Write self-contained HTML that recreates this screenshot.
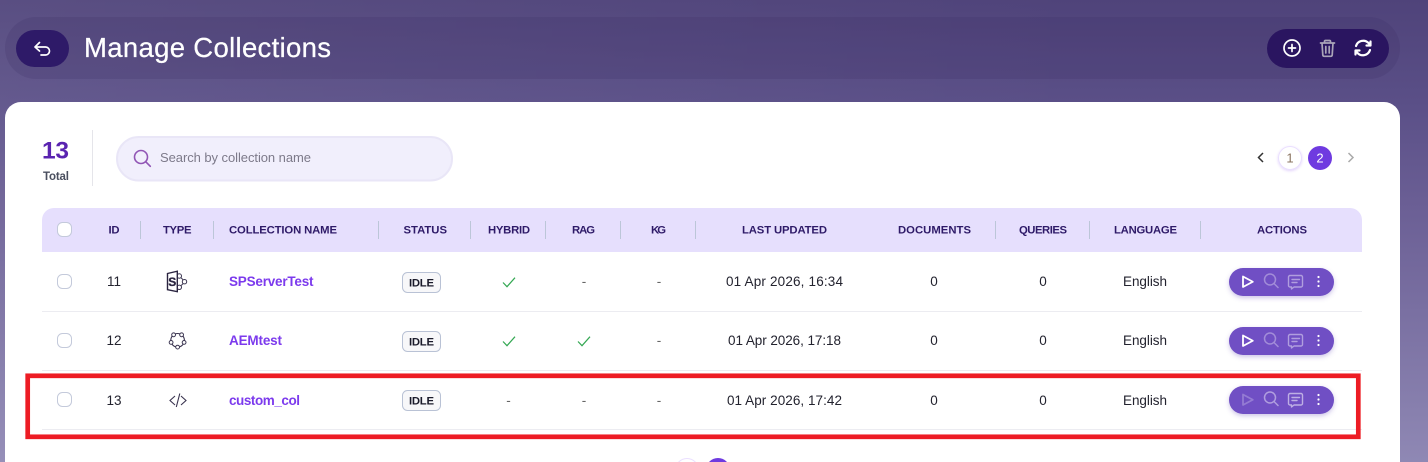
<!DOCTYPE html>
<html lang="en">
<head>
<meta charset="utf-8">
<title>Manage Collections</title>
<style>
html,body{margin:0;padding:0;width:1428px;height:462px;overflow:hidden;background:#fff}
svg{display:block;position:absolute;left:0;top:0}
text{font-family:"Liberation Sans",sans-serif}
.h{font-size:11.3px;font-weight:700;fill:#2e1a68}
.c{font-size:13.5px;fill:#23232f;text-anchor:middle}
.n{font-size:13.5px;font-weight:700;fill:#7c3aed}
.b{font-size:11.3px;font-weight:700;fill:#1a1a2a}
.d{font-size:13.5px;fill:#666;text-anchor:middle}
.box{fill:#fff;stroke:#c4cadb;stroke-width:1}
.sep{stroke:#bcc6d8;stroke-width:1}
.row{stroke:#ececf1;stroke-width:1}
.ok{fill:none;stroke:#34a853;stroke-width:1.2}
.badge{fill:#f7f7f9;stroke:#b9c2d5;stroke-width:1}
.ic{fill:none;stroke:#fff;stroke-width:1.7;stroke-linecap:round;stroke-linejoin:round}
</style>
</head>
<body>
<svg width="1428" height="462" viewBox="0 0 1428 462" xmlns="http://www.w3.org/2000/svg">
<defs>
<linearGradient id="bg" gradientUnits="userSpaceOnUse" x1="0" y1="0" x2="0" y2="462">
<stop offset="0" stop-color="#4f437a"/>
<stop offset=".22" stop-color="#5a4f87"/>
<stop offset=".45" stop-color="#6b5f95"/>
<stop offset="1" stop-color="#8f88b4"/>
</linearGradient>
<linearGradient id="bgl" gradientUnits="userSpaceOnUse" x1="0" y1="0" x2="1100" y2="0">
<stop offset="0" stop-color="#fff" stop-opacity=".06"/>
<stop offset="1" stop-color="#fff" stop-opacity="0"/>
</linearGradient>
<filter id="sh" x="-20%" y="-30%" width="140%" height="170%"><feDropShadow dx="0" dy="2" stdDeviation="2.5" flood-color="#5b3fb0" flood-opacity=".3"/></filter>
<filter id="sh2" x="-30%" y="-30%" width="160%" height="160%"><feDropShadow dx="0" dy="1" stdDeviation="1.2" flood-color="#7c3aed" flood-opacity=".22"/></filter>
<g id="acts">
<rect x="1229" y="0" width="105" height="28" rx="14" fill="#6f4fc4" filter="url(#sh)"/>
<circle cx="1318.5" cy="9" r="1.100" fill="#fff"/><circle cx="1318.5" cy="13.500" r="1.100" fill="#fff"/><circle cx="1318.5" cy="18" r="1.100" fill="#fff"/>
</g>
<path id="pl" d="M1243 8.500v10.500l9.800-5.250z"/>
<path id="se" d="M1275.500 11.500a5.500 5.500 0 1 1-11 0a5.500 5.500 0 1 1 11 0M1274 15.500l4 4"/>
<path id="ch" d="M1290 7.500h11a1.500 1.500 0 0 1 1.500 1.500v8.500a1.500 1.500 0 0 1-1.500 1.500h-7l-2.500 2v-2H1290a1.500 1.500 0 0 1-1.500-1.500V9a1.500 1.500 0 0 1 1.500-1.500zM1292 11.500h7.500M1292 14.500h5"/>
</defs>

<rect width="1428" height="462" fill="url(#bg)"/>
<rect width="1428" height="462" fill="url(#bgl)"/>
<rect x="5" y="17" width="1395" height="62" rx="31" fill="#3c2f63" fill-opacity=".2"/>
<rect x="16" y="30" width="53" height="37" rx="18.500" fill="#2e1a68"/>
<path d="M39.500 42.500 35 47l4.500 4M35 47h10.500a4 4 0 0 1 0 8H41" class="ic"/>
<text x="84" y="57" font-size="27.500" fill="#fff" stroke="#fff" stroke-width=".25" textLength="247">Manage Collections</text>

<rect x="1267" y="29" width="122" height="39" rx="19.500" fill="#2a1560"/>
<circle cx="1292" cy="48" r="8" class="ic"/><path d="M1288.500 48h7M1292 44.500v7" class="ic"/>
<path d="M1320.500 43h14M1324.500 43v-1.500a1 1 0 0 1 1-1h4a1 1 0 0 1 1 1V43M1322 43l.8 12a1.500 1.500 0 0 0 1.500 1.300h6.400a1.500 1.500 0 0 0 1.500-1.300l.8-12M1325.800 46.500v6.500M1329.200 46.500v6.500" fill="none" stroke="#aaa5b8" stroke-width="1.700" stroke-linecap="round" stroke-linejoin="round"/>
<path d="M1356 46a7.500 7.500 0 0 1 12.500-3l2 2M1370.500 41.500v4H1366.500M1370 50a7.500 7.500 0 0 1-12.500 3l-2-2M1355.500 54.500v-4h4" fill="none" stroke="#fff" stroke-width="2.200" stroke-linecap="round" stroke-linejoin="round"/>

<path d="M5 462V118a16 16 0 0 1 16-16h1363a16 16 0 0 1 16 16v344z" fill="#fff"/>

<text x="42" y="158.500" font-size="24.500" font-weight="700" fill="#5a24b0" textLength="27">13</text>
<text x="43" y="180" font-size="11.500" font-weight="700" fill="#4a4f5f" textLength="26">Total</text>
<line x1="92.500" y1="130" x2="92.500" y2="186" stroke="#e5e5ea"/>

<rect x="117" y="137" width="335" height="43.500" rx="21.700" fill="#f1effc" stroke="#e9e6f7" stroke-width="2"/>
<circle cx="141" cy="157" r="6.500" fill="none" stroke="#9156b5" stroke-width="1.600"/>
<path d="M145.800 161.800l4.500 4.500" stroke="#9156b5" stroke-width="1.600" stroke-linecap="round"/>
<text x="160" y="162" font-size="13" fill="#7d7a8a" textLength="151">Search by collection name</text>

<path d="M1263 153l-4.500 4.500 4.500 4.500" fill="none" stroke="#333" stroke-width="1.500"/>
<circle cx="1290" cy="158" r="11.500" fill="#fff" stroke="#eadfff" filter="url(#sh2)"/>
<text x="1290" y="162.500" font-size="13" fill="#8a7460" text-anchor="middle">1</text>
<circle cx="1320" cy="158" r="12" fill="#6f3ae0"/>
<text x="1320" y="162.500" font-size="13" fill="#fff" text-anchor="middle">2</text>
<path d="M1348.500 153l4.500 4.500-4.500 4.500" fill="none" stroke="#aaa" stroke-width="1.500"/>

<path d="M42 252v-32a12 12 0 0 1 12-12h1296a12 12 0 0 1 12 12v32z" fill="#e6dffd"/>
<rect x="57.500" y="222.500" width="14" height="14" rx="5" class="box"/>
<text class="h" x="108.500" y="233.500" textLength="11">ID</text>
<text class="h" x="163" y="233.500" textLength="28.500">TYPE</text>
<text class="h" x="229" y="233.500" textLength="108">COLLECTION NAME</text>
<text class="h" x="403.500" y="233.500" textLength="43.500">STATUS</text>
<text class="h" x="488" y="233.500" textLength="42">HYBRID</text>
<text class="h" x="572" y="233.500" textLength="23">RAG</text>
<text class="h" x="651" y="233.500" textLength="15">KG</text>
<text class="h" x="742" y="233.500" textLength="85">LAST UPDATED</text>
<text class="h" x="898" y="233.500" textLength="73">DOCUMENTS</text>
<text class="h" x="1019" y="233.500" textLength="48">QUERIES</text>
<text class="h" x="1114" y="233.500" textLength="63">LANGUAGE</text>
<text class="h" x="1257" y="233.500" textLength="50">ACTIONS</text>
<g class="sep">
<line x1="140.500" y1="221" x2="140.500" y2="239"/><line x1="213.500" y1="221" x2="213.500" y2="239"/>
<line x1="378.500" y1="221" x2="378.500" y2="239"/><line x1="470.500" y1="221" x2="470.500" y2="239"/>
<line x1="545.500" y1="221" x2="545.500" y2="239"/><line x1="620.500" y1="221" x2="620.500" y2="239"/>
<line x1="695.500" y1="221" x2="695.500" y2="239"/><line x1="995.500" y1="221" x2="995.500" y2="239"/>
<line x1="1089.500" y1="221" x2="1089.500" y2="239"/><line x1="1200.500" y1="221" x2="1200.500" y2="239"/>
</g>

<g class="row">
<line x1="42" y1="311.500" x2="1362" y2="311.500"/>
<line x1="42" y1="370.500" x2="1362" y2="370.500"/>
<line x1="42" y1="429.500" x2="1362" y2="429.500"/>
</g>

<!-- Row 1 -->
<rect x="57.500" y="274.500" width="14" height="14" rx="5" class="box"/>
<text class="c" x="114" y="286">11</text>
<path d="M179.300 276L185 281.700L179.300 287.300" fill="none" stroke="#3a3450" stroke-width="1"/>
<g fill="#fff" stroke="#3a3450" stroke-width="1"><circle cx="179.300" cy="276" r="2.200"/><circle cx="184.500" cy="281.700" r="2.200"/><circle cx="179.300" cy="287.300" r="2.200"/></g>
<path d="M167.500 273.500l9.800-2.300v20.500l-9.800-2z" fill="#fff" stroke="#2a2440" stroke-width="1.400"/>
<text x="172.300" y="286.200" font-size="12" font-weight="700" fill="#2a2440" stroke="#2a2440" stroke-width=".3" text-anchor="middle">S</text>
<text class="n" x="229" y="286" textLength="84.500">SPServerTest</text>
<rect x="402.500" y="272.500" width="38" height="20" rx="5" class="badge"/>
<text class="b" x="409" y="286.500" textLength="25">IDLE</text>
<path d="M503 282.500l4 4.200 8-9" class="ok"/>
<text class="d" x="584" y="286">-</text><text class="d" x="659" y="286">-</text>
<text class="c" x="784.500" y="286" textLength="117">01 Apr 2026, 16:34</text>
<text class="c" x="934" y="286">0</text><text class="c" x="1043" y="286">0</text>
<text class="c" x="1145" y="286" textLength="44">English</text>
<g transform="translate(0,268)">
<use href="#acts"/>
<use href="#pl" fill="none" stroke="#fff" stroke-width="1.800" stroke-linejoin="round"/>
<use href="#se" fill="none" stroke="#fff" stroke-opacity=".35" stroke-width="1.500" stroke-linecap="round"/>
<use href="#ch" fill="none" stroke="#fff" stroke-opacity=".45" stroke-width="1.400" stroke-linecap="round" stroke-linejoin="round"/>
</g>

<!-- Row 2 -->
<rect x="57.500" y="333.500" width="14" height="14" rx="5" class="box"/>
<text class="c" x="114" y="345">12</text>
<circle cx="177.600" cy="340.300" r="6.800" fill="none" stroke="#3a3450" stroke-width="1.100"/>
<g fill="#fff" stroke="#3a3450" stroke-width="1"><circle cx="173.600" cy="334.800" r="1.900"/><circle cx="181.600" cy="334.800" r="1.900"/><circle cx="171.100" cy="342.400" r="1.900"/><circle cx="184.100" cy="342.400" r="1.900"/><circle cx="177.600" cy="347.100" r="1.900"/></g>
<text class="n" x="229" y="345" textLength="53">AEMtest</text>
<rect x="402.500" y="331.500" width="38" height="20" rx="5" class="badge"/>
<text class="b" x="409" y="345.500" textLength="25">IDLE</text>
<path d="M503 341.500l4 4.200 8-9" class="ok"/>
<path d="M578 341.500l4 4.200 8-9" class="ok"/>
<text class="d" x="659" y="345">-</text>
<text class="c" x="784.500" y="345" textLength="113">01 Apr 2026, 17:18</text>
<text class="c" x="934" y="345">0</text><text class="c" x="1043" y="345">0</text>
<text class="c" x="1145" y="345" textLength="44">English</text>
<g transform="translate(0,327)">
<use href="#acts"/>
<use href="#pl" fill="none" stroke="#fff" stroke-width="1.800" stroke-linejoin="round"/>
<use href="#se" fill="none" stroke="#fff" stroke-opacity=".35" stroke-width="1.500" stroke-linecap="round"/>
<use href="#ch" fill="none" stroke="#fff" stroke-opacity=".45" stroke-width="1.400" stroke-linecap="round" stroke-linejoin="round"/>
</g>

<!-- Row 3 -->
<rect x="57.500" y="392.500" width="14" height="14" rx="5" class="box"/>
<text class="c" x="114" y="405">13</text>
<path d="M175 396l-5 4.500 5 4.500M181 396l5 4.500-5 4.500M179.800 393.500l-3.500 13.500" fill="none" stroke="#3a3450" stroke-width="1.100"/>
<text class="n" x="229" y="405" textLength="71">custom_col</text>
<rect x="402.500" y="390.500" width="38" height="20" rx="5" class="badge"/>
<text class="b" x="409" y="404.500" textLength="25">IDLE</text>
<text class="d" x="508.500" y="405">-</text><text class="d" x="584" y="405">-</text><text class="d" x="659" y="405">-</text>
<text class="c" x="784.500" y="405" textLength="115">01 Apr 2026, 17:42</text>
<text class="c" x="934" y="405">0</text><text class="c" x="1043" y="405">0</text>
<text class="c" x="1145" y="405" textLength="44">English</text>
<g transform="translate(0,386)">
<use href="#acts"/>
<use href="#pl" fill="none" stroke="#fff" stroke-opacity=".25" stroke-width="1.800" stroke-linejoin="round"/>
<use href="#se" fill="none" stroke="#fff" stroke-opacity=".45" stroke-width="1.500" stroke-linecap="round"/>
<use href="#ch" fill="none" stroke="#fff" stroke-opacity=".55" stroke-width="1.400" stroke-linecap="round" stroke-linejoin="round"/>
</g>

<!-- Annotation -->
<rect x="27.700" y="375.800" width="1330.600" height="61" fill="none" stroke="#ed1c24" stroke-width="4.700"/>

<!-- Bottom pagination -->
<circle cx="687" cy="470" r="11.500" fill="#fff" stroke="#eadfff"/>
<circle cx="718" cy="470" r="12" fill="#6f3ae0"/>
</svg>
</body>
</html>
